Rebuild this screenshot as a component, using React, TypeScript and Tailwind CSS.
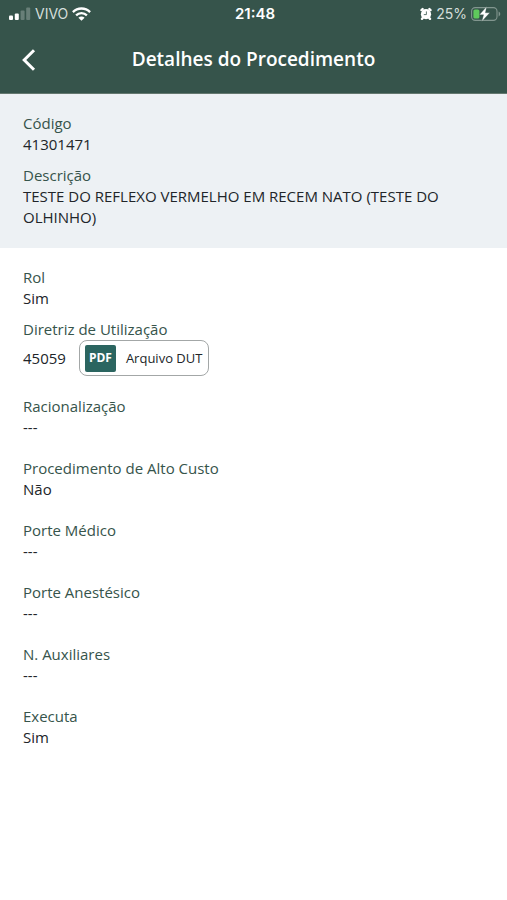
const details = [
  { label: "Racionalização", value: "---" },
  { label: "Procedimento de Alto Custo", value: "Não" },
  { label: "Porte Médico", value: "---" },
  { label: "Porte Anestésico", value: "---" },
  { label: "N. Auxiliares", value: "---" },
  { label: "Executa", value: "Sim" },
];

function SignalIcon() {
  return (
    <svg width="22" height="14" viewBox="0 0 22 14" fill="#fff" aria-hidden="true">
      <rect x="0" y="8.5" width="4" height="4.5" rx="1" />
      <rect x="5.8" y="6.5" width="4" height="6.5" rx="1" />
      <rect x="11.6" y="3.5" width="4" height="9.5" rx="1" opacity="0.25" />
      <rect x="17.2" y="0.5" width="4" height="12.5" rx="1" opacity="0.25" />
    </svg>
  );
}

function WifiIcon() {
  return (
    <svg width="19" height="14" viewBox="0 0 19 14" fill="none" stroke="#fff" strokeWidth="2.3" aria-hidden="true">
      <path d="M0.9 5.1C5.6 0.3 13.4 0.3 18.1 5.1" />
      <path d="M4.1 8.4C7.1 5.4 11.9 5.4 14.9 8.4" />
      <path d="M9.5 13.8L6.4 10.7C8.2 9.1 10.8 9.1 12.6 10.7Z" fill="#fff" stroke="none" />
    </svg>
  );
}

function AlarmIcon() {
  return (
    <svg width="12" height="14" viewBox="0 0 12 14" aria-hidden="true">
      <circle cx="6" cy="7.2" r="5.1" fill="#fff" />
      <path
        d="M1.5 3.1L2.6 2.1M10.5 3.1L9.4 2.1M2.6 11.2L2 11.8M9.4 11.2L10 11.8"
        stroke="#fff"
        strokeWidth="2.4"
        strokeLinecap="round"
      />
      <path d="M6.4 4.4V7.6H3.8" stroke="#36544b" strokeWidth="0.8" fill="none" />
    </svg>
  );
}

function BatteryIcon() {
  return (
    <svg width="30" height="16" viewBox="0 0 30 16" fill="none" aria-hidden="true">
      <rect x="0.6" y="1.6" width="25.4" height="12.8" rx="3.6" stroke="#82968f" strokeWidth="1.1" />
      <path d="M27.6 5.6C29.8 6.4 29.8 9.6 27.6 10.4Z" fill="#82968f" />
      <rect x="2.4" y="3.4" width="6" height="9.2" rx="1.6" fill="#5fc95c" />
      <path
        d="M15.7 0.6L8.4 8.8H12.6L10.8 15.4L18.8 6.8H14.4Z"
        fill="#fff"
        stroke="#36544b"
        strokeWidth="0.3"
      />
    </svg>
  );
}

function Field({ label, value }: { label: string; value: string }) {
  return (
    <div>
      <dt className="text-[#36544b]">{label}</dt>
      <dd className="text-[#212529]">{value}</dd>
    </div>
  );
}

export default function App() {
  return (
    <div className="min-h-screen bg-white font-['Open_Sans',sans-serif] text-[15px] leading-[21px]">
      <header className="border-b border-[#64786f] bg-[#36544b] text-white">
        <div className="grid h-7 grid-cols-3 items-center pr-1.5 pl-[9px] font-[Inter,sans-serif] text-sm">
          <div className="flex items-center gap-1">
            <SignalIcon />
            <span className="text-[#d5dfdb]">VIVO</span>
            <WifiIcon />
          </div>
          <span className="text-center text-[15px] font-semibold">21:48</span>
          <div className="flex items-center justify-end gap-1">
            <AlarmIcon />
            <span className="text-[#d5dfdb]">25%</span>
            <BatteryIcon />
          </div>
        </div>
        <div className="grid h-[65px] grid-cols-[40px_1fr_40px] items-center px-2 pb-0.5">
          <button type="button" aria-label="Voltar" className="flex h-10 items-center justify-center">
            <svg width="16" height="24" viewBox="0 0 16 24" fill="none" stroke="#fff" strokeWidth="3">
              <path d="M14 2.2L4.2 12L14 21.8" />
            </svg>
          </button>
          <h1 className="text-center text-[19px] font-semibold">Detalhes do Procedimento</h1>
        </div>
      </header>

      <main>
        <dl className="flex flex-col gap-2.5 bg-[#edf1f4] px-[23px] pt-[19px] pb-5">
          <Field label="Código" value="41301471" />
          <Field label="Descrição" value="TESTE DO REFLEXO VERMELHO EM RECEM NATO (TESTE DO OLHINHO)" />
        </dl>

        <dl className="flex flex-col gap-5 px-[23px] py-[19px]">
          <div className="flex flex-col gap-2.5">
            <Field label="Rol" value="Sim" />
            <div>
              <dt className="text-[#36544b]">Diretriz de Utilização</dt>
              <dd className="flex items-center gap-[13px] text-[#212529]">
                45059
                <button
                  type="button"
                  className="flex h-9 items-center gap-2.5 rounded-lg border border-[#a3a7a7] pr-1.5 pl-[5px] text-[13px]"
                >
                  <span className="flex h-[27px] w-[31px] items-center justify-center rounded-xs bg-[#2b6560] text-xs font-bold text-white">
                    PDF
                  </span>
                  Arquivo DUT
                </button>
              </dd>
            </div>
          </div>
          {details.map((item) => (
            <Field key={item.label} label={item.label} value={item.value} />
          ))}
        </dl>
      </main>
    </div>
  );
}
